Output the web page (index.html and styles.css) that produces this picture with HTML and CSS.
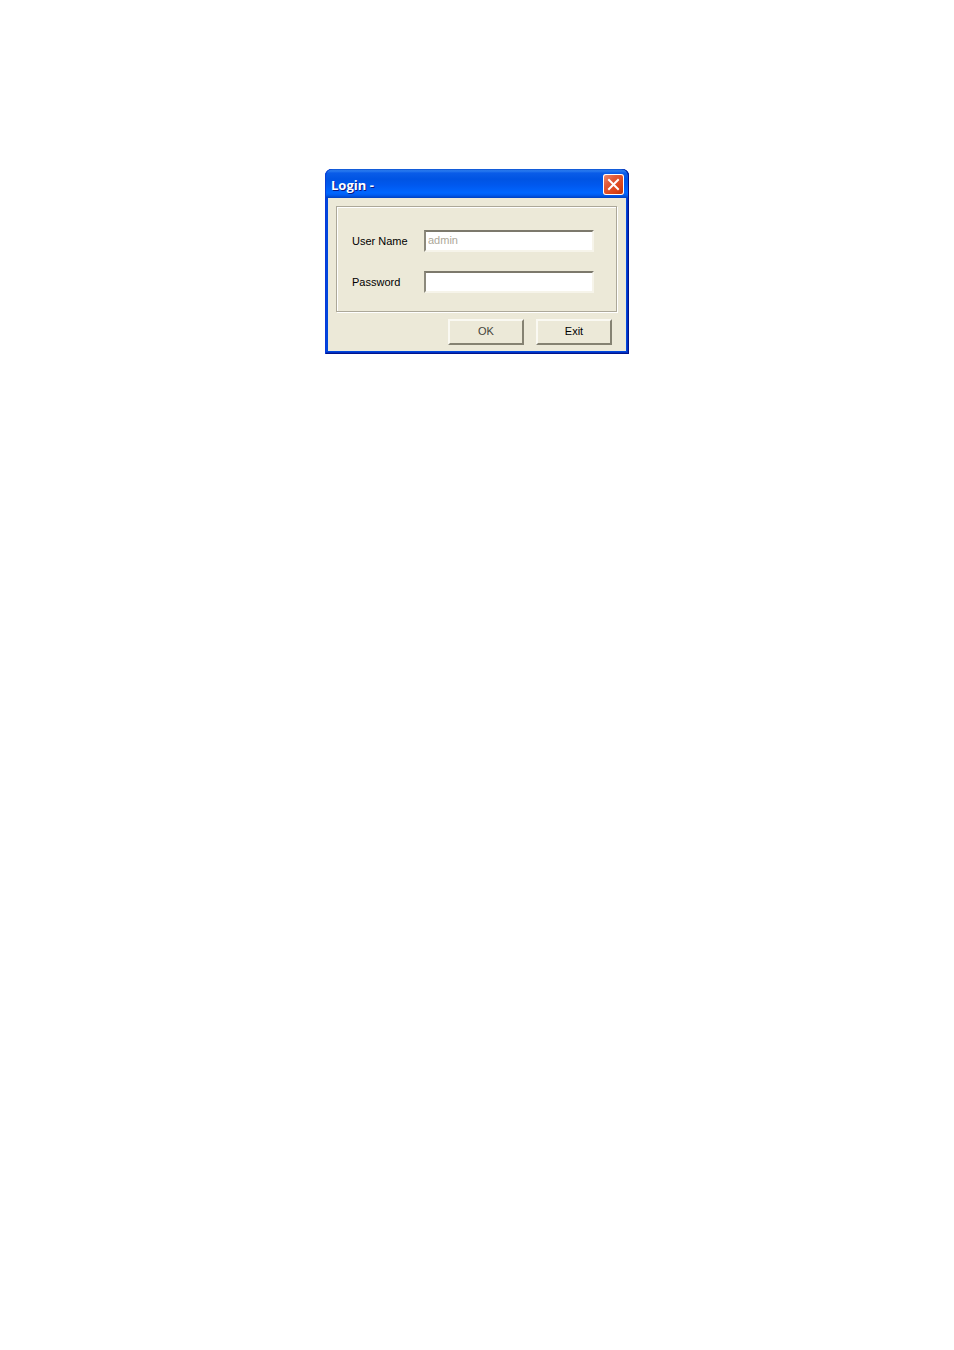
FILE: index.html
```html
<!DOCTYPE html>
<html lang="en">

<head>
    <meta charset="UTF-8">
    <meta name="viewport" content="width=device-width, initial-scale=1.0">
    <title>Login</title>
    <link rel="stylesheet" href="styles.css">
</head>

<body>
    <form class="window">
        <div class="titlebar">
            <h1 class="title">Login -</h1>
            <button class="close" type="button" aria-label="Close">
                <svg width="21" height="21" viewBox="0 0 21 21">
                    <path d="M6 6L15 15M15 6L6 15" stroke="#fff" stroke-width="2" stroke-linecap="square" />
                </svg>
            </button>
        </div>
        <div class="content">
            <div class="group">
                <div class="row">
                    <label for="username">User Name</label>
                    <input id="username" type="text" value="admin" disabled>
                </div>
                <div class="row">
                    <label for="password">Password</label>
                    <input id="password" type="password">
                </div>
            </div>
            <div class="buttons">
                <button class="btn ok" type="submit">OK</button>
                <button class="btn" type="button">Exit</button>
            </div>
        </div>
    </form>
</body>

</html>
```
FILE: styles.css
```css
* {
    box-sizing: border-box;
}

body {
    margin: 0;
    padding: 169px 16px 16px;
    background: #fff;
    font-family: "Liberation Sans", Arial, sans-serif;
    font-size: 11px;
    line-height: 16px;
    color: #000;
}

.window {
    width: 100%;
    max-width: 304px;
    margin: 0 auto;
    padding: 0 3px 3px;
    background: #0046dc;
    border-radius: 7px 7px 0 0;
    box-shadow: inset 1px 0 #0a38d8, inset -1px -1px #00138c, inset -2px -2px #0030c0;
}

.titlebar {
    display: flex;
    align-items: center;
    justify-content: space-between;
    height: 29px;
    margin: 0 -3px;
    padding: 2px 5px 0 6px;
    border-radius: 7px 7px 0 0;
    background: linear-gradient(#0a4fd0 0, #2a7cf0 6%, #0a5ce8 14%, #0054e3 35%, #0058ee 55%, #0066ff 82%, #005cf0 90%, #0040c0 100%);
    box-shadow: inset 1px 0 #0a3fd4, inset -1px 0 #00138c;
}

.title {
    margin: 0;
    font-family: "Open Sans", "Noto Sans", sans-serif;
    font-size: 13px;
    line-height: 16px;
    font-weight: 700;
    color: #fff;
    text-shadow: 1px 1px #0a1883;
}

.close {
    width: 21px;
    height: 21px;
    padding: 0;
    border: 0;
    border-radius: 3px;
    background: linear-gradient(135deg, #f09078 0, #e25a38 35%, #dc4418 70%, #b83008 100%);
    box-shadow: inset 0 0 0 1px #fff;
}

.close svg {
    display: block;
}

.content {
    padding: 8px 9px 6px 8px;
    background: #ece9d8;
}

/* etched frame around the fields */
.group {
    display: flex;
    flex-direction: column;
    gap: 19px;
    padding: 23px 22px 18px 15px;
    border: 1px solid #aca899;
    box-shadow: inset 1px 1px #fff, 1px 1px #fff;
}

.row {
    display: flex;
    align-items: center;
}

.row label {
    width: 72px;
}

.row input {
    flex: 1;
    min-width: 0;
    height: 22px;
    padding: 0 2px 2px;
    border: 2px solid;
    border-color: #7c796c #f6f4ea #f6f4ea #8c897c;
    border-radius: 0;
    outline: 0;
    background: #fff;
    font: inherit;
}

.row input:disabled {
    color: #aca899;
}

.buttons {
    display: flex;
    justify-content: flex-end;
    gap: 12px;
    padding: 7px 5px 0 0;
}

.btn {
    width: 76px;
    height: 26px;
    padding: 0 0 2px;
    border: 2px solid;
    border-color: #faf9f2 #858272 #858272 #faf9f2;
    border-radius: 0;
    background: #ece9d8;
    font: inherit;
    color: #000;
}

.btn.ok {
    color: #444338;
}
```
